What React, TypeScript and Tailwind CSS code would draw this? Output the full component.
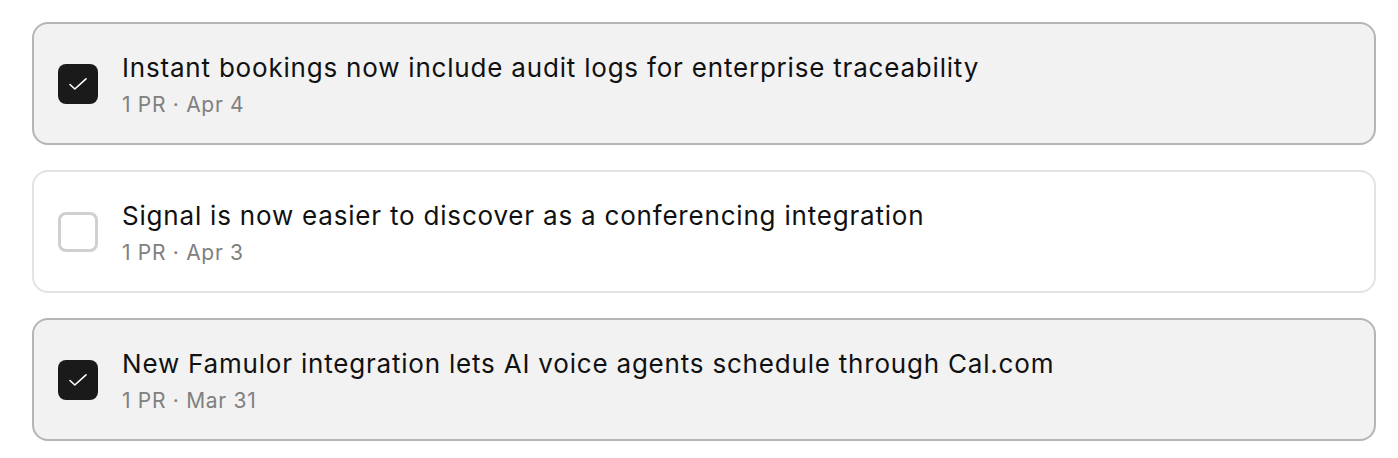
import React from 'react';

interface Item {
  title: string;
  meta: string;
  checked: boolean;
}

const ITEMS: Item[] = [
  { title: 'Instant bookings now include audit logs for enterprise traceability', meta: '1 PR · Apr 4', checked: true },
  { title: 'Signal is now easier to discover as a conferencing integration', meta: '1 PR · Apr 3', checked: false },
  { title: 'New Famulor integration lets AI voice agents schedule through Cal.com', meta: '1 PR · Mar 31', checked: true },
];

const Checkbox: React.FC<{ checked: boolean }> = ({ checked }) =>
  checked ? (
    <div className="w-10 h-10 rounded-[8px] bg-[#1a1a1a] shrink-0">
      <svg width="40" height="40" viewBox="0 0 40 40" fill="none">
        <path d="M12 20.5 L16.8 25 L28 14.8" stroke="white" strokeWidth="1.6" strokeLinecap="round" strokeLinejoin="round" />
      </svg>
    </div>
  ) : (
    <div className="w-10 h-10 rounded-[8px] border-[3px] border-[#d0d0d3] bg-white shrink-0" />
  );

export default function App() {
  return (
    <div className="bg-white min-h-screen pt-[22px] pl-8" style={{ fontFamily: 'Inter, "Noto Sans", sans-serif' }}>
      <div className="w-[1344px] flex flex-col gap-[25px]">
        {ITEMS.map((item, i) => (
          <div
            key={i}
            className={`h-[123px] rounded-[16px] border-2 flex items-center pl-6 gap-6 ${
              item.checked ? 'bg-[#f2f2f2] border-[#b5b5b5]' : 'bg-white border-[#e3e3e3]'
            }`}
          >
            <Checkbox checked={item.checked} />
            <div className="flex flex-col gap-[5px] mt-[3px]">
              <span className="text-[26px] leading-[34px] text-[#111111] tracking-[0.8px]">{item.title}</span>
              <span className="text-[21px] leading-[30px] text-[#808080] tracking-[0.7px]">{item.meta}</span>
            </div>
          </div>
        ))}
      </div>
    </div>
  );
}
